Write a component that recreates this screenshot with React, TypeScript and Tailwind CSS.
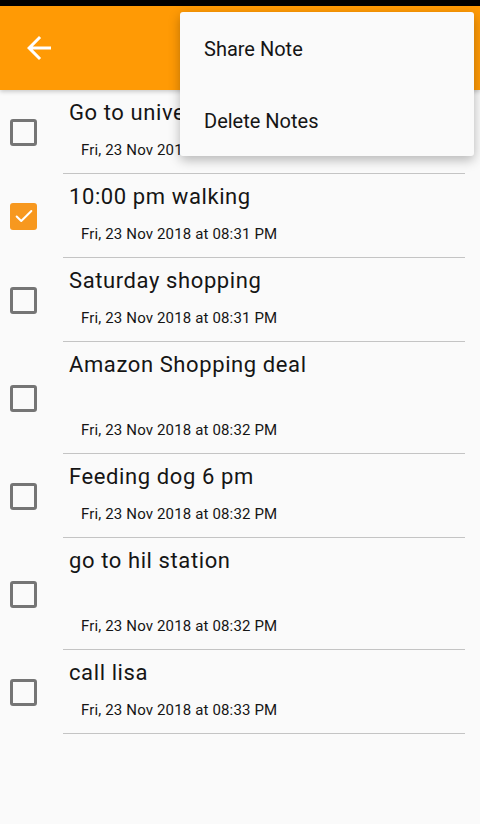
import { Fragment } from 'react'

type Note = { title: string; date: string; checked?: boolean; tall?: boolean }

const notes: Note[] = [
  { title: 'Go to university', date: 'Fri, 23 Nov 2018 at 08:31 PM' },
  { title: '10:00 pm walking', date: 'Fri, 23 Nov 2018 at 08:31 PM', checked: true },
  { title: 'Saturday shopping', date: 'Fri, 23 Nov 2018 at 08:31 PM' },
  { title: 'Amazon Shopping deal', date: 'Fri, 23 Nov 2018 at 08:32 PM', tall: true },
  { title: 'Feeding dog 6 pm', date: 'Fri, 23 Nov 2018 at 08:32 PM' },
  { title: 'go to hil station', date: 'Fri, 23 Nov 2018 at 08:32 PM', tall: true },
  { title: 'call lisa', date: 'Fri, 23 Nov 2018 at 08:33 PM' },
]

function CheckBox({ checked }: { checked?: boolean }) {
  if (checked) {
    return (
      <div className="w-[27px] h-[27px] rounded-[3px] bg-[#f7981f] flex items-center justify-center">
        <svg width="22" height="22" viewBox="0 0 24 24" fill="none">
          <path d="M4 12.5l5 5L20 6.5" stroke="#fff" strokeWidth="2.2" strokeLinecap="round" strokeLinejoin="round" />
        </svg>
      </div>
    )
  }
  return <div className="w-[27px] h-[27px] rounded-[3px] border-[3px] border-[#757575]" />
}

export default function App() {
  return (
    <div
      className="relative w-[480px] h-[824px] overflow-hidden bg-[#fafafa] text-[#151515]"
      style={{ fontFamily: 'Roboto, "Noto Sans", sans-serif' }}
    >
      <div className="h-[6px] bg-black" />
      <header className="relative z-10 h-[84px] bg-[#ff9a05] flex items-center pl-[21px] shadow-[0_2px_4px_rgba(0,0,0,0.18)]">
        <svg width="36" height="36" viewBox="0 0 24 24" fill="#fff">
          <path d="M20 11H7.83l5.59-5.59L12 4l-8 8 8 8 1.41-1.41L7.83 13H20v-2z" />
        </svg>
      </header>

      <section>
        {notes.map((n) => (
          <Fragment key={n.title}>
            <div className="flex">
              <div className="w-[63px] shrink-0 flex items-center pl-[10px]">
                <CheckBox checked={n.checked} />
              </div>
              <div className="flex-1 mr-[15px] border-b border-[#c4c4c4] pl-[6px] pt-[9px] pb-[13px]">
                <p className="text-[22px] leading-[28px] tracking-[0.6px] whitespace-nowrap">{n.title}</p>
                {n.tall && <div className="h-[28px]" />}
                <p className="mt-[13px] ml-[12px] text-[15px] leading-[20px] tracking-[0.15px]">{n.date}</p>
              </div>
            </div>
          </Fragment>
        ))}
      </section>

      <div className="absolute left-[180px] top-[12px] z-20 w-[294px] bg-[#fafafa] rounded-[3px] shadow-[0_4px_12px_rgba(0,0,0,0.28)]">
        <div className="h-[72px] flex items-center pl-[24px] pt-[2px] text-[20px]">Share Note</div>
        <div className="h-[72px] flex items-center pl-[24px] pt-[2px] text-[20px]">Delete Notes</div>
      </div>
    </div>
  )
}
